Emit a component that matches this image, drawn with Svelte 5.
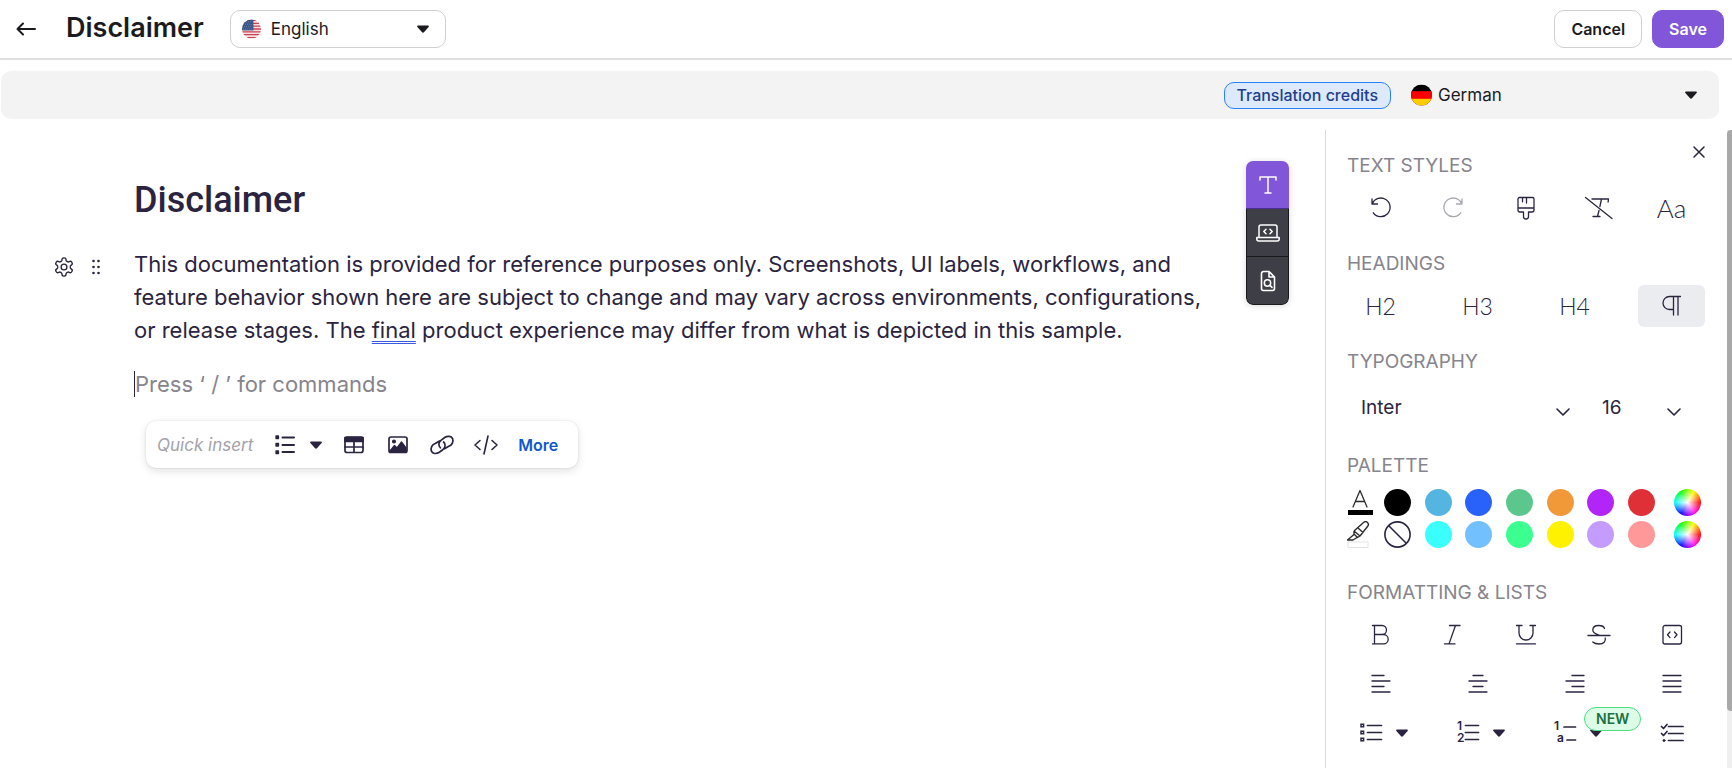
<script>
    let sourceLanguage = $state('English');
    let targetLanguage = $state('German');
    let fontFamily = $state('Inter');
    let fontSize = $state('16');
    let block = $state('Paragraph');
    let tool = $state('text');
    let panelOpen = $state(true);

    const tools = [
        { id: 'text', label: 'Text' },
        { id: 'laptop', label: 'Embed code' },
        { id: 'docsearch', label: 'Find in document' }
    ];

    const textStyles = [
        { id: 'undo', label: 'Undo' },
        { id: 'redo', label: 'Redo', disabled: true },
        { id: 'brush', label: 'Copy formatting' },
        { id: 'clear', label: 'Clear formatting' }
    ];

    const headings = ['H2', 'H3', 'H4'];

    const textColors = ['#000000', '#53b5e0', '#2962fb', '#5cc78d', '#f19938', '#b125f8', '#de3036'];
    const markerColors = ['#3bffff', '#73c0ff', '#3bff8f', '#fff200', '#c49cff', '#ff9999'];

    const formats = [
        { id: 'bold', label: 'Bold' },
        { id: 'italic', label: 'Italic' },
        { id: 'underline', label: 'Underline' },
        { id: 'strike', label: 'Strikethrough' },
        { id: 'inlinecode', label: 'Inline code' }
    ];

    const alignments = [
        { id: 'left', label: 'Align left' },
        { id: 'center', label: 'Align center' },
        { id: 'right', label: 'Align right' },
        { id: 'justify', label: 'Justify' }
    ];

    const inserts = [
        { id: 'table', label: 'Table' },
        { id: 'image', label: 'Image' },
        { id: 'link', label: 'Link' },
        { id: 'code', label: 'Code' }
    ];
</script>

{#snippet caret()}
    <svg class="caret" width="12" height="8" viewBox="0 0 12 8" aria-hidden="true">
        <path d="M1 .5h10c.9 0 1.200.8.6 1.500L7.200 7a1.600 1.600 0 0 1-2.400 0L.4 2C-.2 1.300.1.5 1 .5z" fill="currentColor" />
    </svg>
{/snippet}

{#snippet chevron()}
    <svg class="chevron" width="14" height="8" viewBox="0 0 14 8" fill="none" stroke="currentColor" stroke-width="1.600" stroke-linecap="round" stroke-linejoin="round" aria-hidden="true">
        <path d="M1 1l6 6 6-6" />
    </svg>
{/snippet}

{#snippet icon(name)}
    <svg class="icon" width="24" height="24" viewBox="0 0 24 24" fill="none" stroke="currentColor" stroke-width="1.300" stroke-linecap="round" stroke-linejoin="round" aria-hidden="true">
        {#if name === 'text'}
            <path stroke-width="1.500" d="M4 7V4h16v3M12 4v16M9 20h6" />
        {:else if name === 'laptop'}
            <path stroke-width="1.500" d="M3 16V6a2 2 0 0 1 2-2h14a2 2 0 0 1 2 2v10M.8 16.500h22.400v1.500a2 2 0 0 1-2 2H2.800a2 2 0 0 1-2-2zM10 8.200L7.800 10.500 10 12.800M14 8.200l2.200 2.300-2.200 2.300" />
        {:else if name === 'docsearch'}
            <path stroke-width="1.600" d="M13 2.500H7.500a2 2 0 0 0-2 2v15a2 2 0 0 0 2 2h9a2 2 0 0 0 2-2V8zM13 2.500V8h5.500" />
            <circle stroke-width="1.500" cx="11.500" cy="14" r="3.200" />
            <path stroke-width="1.500" d="M14 16.400l2 2" />
        {:else if name === 'undo'}
            <path d="M3 3v5h5.500M3.200 7.800A9.300 9.300 0 1 1 4.300 16.800" />
        {:else if name === 'redo'}
            <path d="M21 3v5h-5.500M20.800 7.800A9.300 9.300 0 1 0 19.700 16.800" />
        {:else if name === 'brush'}
            <path d="M4 3a1.500 1.500 0 0 1 1.500-1.500h13A1.500 1.500 0 0 1 20 3v11a2 2 0 0 1-2 2h-3.500v4.500a2.500 2.500 0 0 1-5 0V16H6a2 2 0 0 1-2-2zM4 12h16M8.500 1.500v4.300M12.500 1.500v5.500" />
        {:else if name === 'clear'}
            <path d="M-1.500 1.500L25 22.500M5 3h16.500l-.4 3M14.500 3l-1.600 7.500M12 14.500L10.500 20.500M6 20.500h7" />
        {:else if name === 'bold'}
            <path d="M3.500 2.500H13a4.500 4.500 0 0 1 0 9H5.500M13 11.500h1.500a4.700 4.700 0 0 1 0 9.400h-11M5.500 2.500v18.400" />
        {:else if name === 'italic'}
            <path d="M8.500 2.500H19M3.500 20.900h10.500M14.500 2.500L8 20.900" />
        {:else if name === 'underline'}
            <path d="M2.500 2.500h5.500M16 2.500h5.500M5 2.500v7.500a7 7 0 0 0 14 0V2.500M2.500 20.900h19" />
        {:else if name === 'strike'}
            <path d="M1 12.500h22M17.500 5.500c-.6-2-2.800-3-5.700-3-3.800 0-6 1.600-6 4.500 0 3.200 3.500 4.200 7 5.500M18.200 15c1 3.500-1.700 6-6 6-2.800 0-5.200-.8-6.400-2" />
        {:else if name === 'inlinecode'}
            <rect x="3" y="2.500" width="18.500" height="18.500" rx="2" />
            <path d="M10 9l-2.500 2.800L10 14.600M14.500 9l2.500 2.800-2.500 2.800" />
        {:else if name === 'left'}
            <path d="M3 3.500h12M3 9h18M3 14.500h12M3 20h18" />
        {:else if name === 'center'}
            <path d="M7 3.500h10M3 9h18M7 14.500h10M3 20h18" />
        {:else if name === 'right'}
            <path d="M9 3.500h12M3 9h18M9 14.500h12M3 20h18" />
        {:else if name === 'justify'}
            <path d="M3 3.500h18M3 9h18M3 14.500h18M3 20h18" />
        {:else if name === 'bullets'}
            <path stroke-width="1.700" d="M8.500 4.500H22.500M8.500 11.500H22.500M8.500 18.500H22.500" />
            <path stroke-width="1.500" stroke-linejoin="miter" d="M2 3.200h2.600v2.600H2zM2 10.200h2.600v2.600H2zM2 17.200h2.600v2.600H2z" />
        {:else if name === 'numbers'}
            <path stroke-width="1.700" d="M9.500 4.500h13M9.500 11.500h13M9.500 18.500h13" />
            <text x="1" y="9">1</text>
            <text x="1" y="21">2</text>
        {:else if name === 'outline'}
            <path stroke-width="1.700" d="M11 6h11.500M14 19h8.500" />
            <text x="1" y="9">1</text>
            <text x="4" y="21">a</text>
        {:else if name === 'checks'}
            <path stroke-width="1.700" d="M8.500 5.500H23M8.500 12.500H23M8.500 19.500H23M1.500 5.500l2 2L7 3.500M1.500 12.500l2 2L7 10.500" />
            <circle cx="4" cy="19.500" r="1" fill="currentColor" stroke-width="1" />
        {:else if name === 'list'}
            <path stroke-width="2" d="M9.500 4.500H21M9.500 12H21M9.500 19H21" />
            <path d="M3 3h2.500v2.500H3zM3 10.500h2.500V13H3zM3 18h2.500v2.500H3z" fill="currentColor" />
        {:else if name === 'table'}
            <rect stroke-width="1.700" x="3" y="4" width="18" height="15.500" rx="2" />
            <path stroke-width="1.700" d="M3 4.500h18v4H3z" fill="currentColor" />
            <path stroke-width="1.700" d="M3 14h18M12 8v11" />
        {:else if name === 'image'}
            <rect stroke-width="1.700" x="3" y="4" width="18" height="15.500" rx="2" />
            <path d="M4 18l4.500-5.500 2.500 2.500 4.500-6L20 15v4H4z" fill="currentColor" />
            <circle cx="8" cy="8.500" r="1.400" fill="currentColor" />
        {:else if name === 'link'}
            <path stroke-width="1.700" d="M9.500 8L5.200 10.500a6 6 0 0 0-3.800 7.700c1.300 2.700 5 3 7.900 1.100l3.500-2.600c2.700-2.200 3.100-5.700.8-7.700M14.500 15.800l4.300-2.500a6 6 0 0 0 3.800-7.700c-1.300-2.700-5-3-7.900-1.100l-3.500 2.600C8.500 9.300 8.100 12.800 10.400 14.800" />
        {:else if name === 'code'}
            <path stroke-width="1.600" d="M6 7.500L1 12l5 4.500M18 7.500l5 4.500-5 4.500M14 3l-4 18" />
        {/if}
    </svg>
{/snippet}

<div class="page">
    <header class="topbar">
        <button class="back" aria-label="Back">
            <svg width="20" height="14" viewBox="0 0 20 14" fill="none" stroke="currentColor" stroke-width="2" stroke-linecap="round" stroke-linejoin="round">
                <path d="M19 7H1.500M7 1.500L1.500 7 7 12.500" />
            </svg>
        </button>
        <h1>Disclaimer</h1>
        <label class="language">
            <svg width="19" height="20" viewBox="0 0 20 20" aria-hidden="true">
                <clipPath id="us"><circle cx="10" cy="10" r="10" /></clipPath>
                <g clip-path="url(#us)">
                    <rect width="20" height="20" fill="#f7dfe1" />
                    <path d="M0 1h20M0 4h20M0 7h20M0 10h20M0 13h20M0 16h20M0 19h20" stroke="#cb4453" stroke-width="1.400" />
                    <rect width="12" height="11.500" fill="#3a5587" />
                    <path d="M2 2.500h9M1 5h10M2 7.500h9M1 10h10" stroke="#8193b5" stroke-width=".8" stroke-dasharray="1 1.200" />
                </g>
            </svg>
            <select bind:value={sourceLanguage} aria-label="Source language">
                <option>English</option>
                <option>French</option>
            </select>
            {@render caret()}
        </label>
        <div class="actions">
            <button class="btn">Cancel</button>
            <button class="btn primary">Save</button>
        </div>
    </header>

    <div class="translation">
        <button class="credits">Translation credits</button>
        <label class="target">
            <svg width="21" height="22" viewBox="0 0 22 22" aria-hidden="true">
                <clipPath id="de"><circle cx="11" cy="11" r="11" /></clipPath>
                <g clip-path="url(#de)">
                    <rect width="22" height="22" fill="#000" />
                    <rect y="7" width="22" height="15" fill="#f00" />
                    <rect y="15" width="22" height="7" fill="#fc0" />
                </g>
            </svg>
            <select bind:value={targetLanguage} aria-label="Target language">
                <option>German</option>
                <option>Spanish</option>
            </select>
            {@render caret()}
        </label>
    </div>

    <div class="workspace">
        <main class="editor">
            <div class="gutter">
                <button aria-label="Block settings">
                    <svg width="20" height="20" viewBox="1 1 22 22" fill="none" stroke="currentColor" stroke-width="1.500" stroke-linejoin="round">
                        <circle cx="12" cy="12" r="3.200" />
                        <path d="M12.220 2h-.44a2 2 0 0 0-2 2v.18a2 2 0 0 1-1 1.730l-.43.25a2 2 0 0 1-2 0l-.15-.08a2 2 0 0 0-2.730.73l-.22.38a2 2 0 0 0 .73 2.730l.15.1a2 2 0 0 1 1 1.720v.51a2 2 0 0 1-1 1.740l-.15.09a2 2 0 0 0-.73 2.730l.22.38a2 2 0 0 0 2.730.73l.15-.08a2 2 0 0 1 2 0l.43.25a2 2 0 0 1 1 1.730V20a2 2 0 0 0 2 2h.44a2 2 0 0 0 2-2v-.18a2 2 0 0 1 1-1.730l.43-.25a2 2 0 0 1 2 0l.15.08a2 2 0 0 0 2.730-.73l.22-.39a2 2 0 0 0-.73-2.730l-.15-.08a2 2 0 0 1-1-1.740v-.5a2 2 0 0 1 1-1.740l.15-.09a2 2 0 0 0 .73-2.730l-.22-.38a2 2 0 0 0-2.730-.73l-.15.08a2 2 0 0 1-2 0l-.43-.25a2 2 0 0 1-1-1.730V4a2 2 0 0 0-2-2z" />
                    </svg>
                </button>
                <button aria-label="Move block">
                    <svg width="8" height="16" viewBox="0 0 8 16" fill="currentColor">
                        <circle cx="1.500" cy="2" r="1.300" /><circle cx="6.500" cy="2" r="1.300" />
                        <circle cx="1.500" cy="8" r="1.300" /><circle cx="6.500" cy="8" r="1.300" />
                        <circle cx="1.500" cy="14" r="1.300" /><circle cx="6.500" cy="14" r="1.300" />
                    </svg>
                </button>
            </div>

            <article>
                <h2>Disclaimer</h2>
                <p>
                    This documentation is provided for reference purposes only. Screenshots, UI labels, workflows, and
                    feature behavior shown here are subject to change and may vary across environments, configurations,
                    or release stages. The <span class="grammar">final</span> product experience may differ from what is
                    depicted in this sample.
                </p>
                <input class="command" placeholder="Press ‘ / ’ for commands" aria-label="New block" />
                <div class="quick">
                    <span class="hint">Quick insert</span>
                    <button class="split" aria-label="List">{@render icon('list')}{@render caret()}</button>
                    {#each inserts as item (item.id)}
                        <button aria-label={item.label}>{@render icon(item.id)}</button>
                    {/each}
                    <button class="more">More</button>
                </div>
            </article>

            <div class="dock">
                {#each tools as item (item.id)}
                    <button class:active={tool === item.id} aria-label={item.label} onclick={() => (tool = item.id)}>
                        {@render icon(item.id)}
                    </button>
                {/each}
            </div>
        </main>

        {#if panelOpen}
            <aside>
                <button class="close" aria-label="Close panel" onclick={() => (panelOpen = false)}>
                    <svg width="12" height="12" viewBox="0 0 12 12" stroke="currentColor" stroke-width="1.500" stroke-linecap="round">
                        <path d="M1 1l10 10M11 1L1 11" />
                    </svg>
                </button>

                <section>
                    <h3>TEXT STYLES</h3>
                    <div class="row">
                        {#each textStyles as item (item.id)}
                            <button aria-label={item.label} disabled={item.disabled}>{@render icon(item.id)}</button>
                        {/each}
                        <button class="letter case" aria-label="Change case">Aa</button>
                    </div>
                </section>

                <section>
                    <h3>HEADINGS</h3>
                    <div class="row">
                        {#each headings as name (name)}
                            <button class="letter" class:selected={block === name} onclick={() => (block = name)}>{name}</button>
                        {/each}
                        <button class:selected={block === 'Paragraph'} aria-label="Paragraph" onclick={() => (block = 'Paragraph')}>
                            <svg width="24" height="24" viewBox="0 0 24 24" fill="none" stroke="currentColor" stroke-width="1.300" stroke-linecap="round">
                                <path d="M20.500 2.500H9.500a6.500 6.500 0 0 0 0 13h4M13.500 2.500v18.500M18 2.500v18.500" />
                            </svg>
                        </button>
                    </div>
                </section>

                <section>
                    <h3>TYPOGRAPHY</h3>
                    <div class="fonts">
                        <label>
                            <select bind:value={fontFamily} aria-label="Font family">
                                <option>Inter</option>
                                <option>Roboto</option>
                            </select>
                            {@render chevron()}
                        </label>
                        <label class="size">
                            <select bind:value={fontSize} aria-label="Font size">
                                <option>16</option>
                                <option>18</option>
                            </select>
                            {@render chevron()}
                        </label>
                    </div>
                </section>

                <section>
                    <h3>PALETTE</h3>
                    <div class="palette">
                        <svg width="26" height="27" viewBox="0 0 26 27" fill="none" stroke="#2c2c2c" stroke-width="1.300" stroke-linecap="round" stroke-linejoin="round" aria-hidden="true">
                            <path d="M6 18L13 1.500 20 18M8.500 12.500h9" />
                            <path d="M1 23.500h25" stroke="#000" stroke-width="5" stroke-linecap="butt" />
                        </svg>
                        <div class="swatches">
                            {#each textColors as color (color)}
                                <button style:background={color} aria-label="Text color {color}"></button>
                            {/each}
                        </div>
                        <button class="wheel" aria-label="Custom text color"></button>
                    </div>
                    <div class="palette">
                        <svg width="26" height="27" viewBox="0 0 26 27" fill="none" stroke="#2c2c2c" stroke-width="1.400" stroke-linejoin="round" aria-hidden="true">
                            <path d="M7 10L16.500 1.500c1.300-1.200 3-1 4 0s1 2.800 0 4L13 15M7 10v3l3.500 3.500 2.500-1.500M7 10l6 5M7 13.500L.5 19H6l4-2.500M11 7l5 4.500" />
                            <path d="M1 21h20v5.500H1z" stroke="#e3e3e3" stroke-width="1" fill="#fff" />
                        </svg>
                        <div class="swatches">
                            <button class="none" aria-label="No highlight">
                                <svg width="27" height="27" viewBox="0 0 27 27" fill="none" stroke="currentColor" stroke-width="1.600">
                                    <circle cx="13.500" cy="13.500" r="12.600" />
                                    <path d="M4.500 4.500l18 18" />
                                </svg>
                            </button>
                            {#each markerColors as color (color)}
                                <button style:background={color} aria-label="Highlight {color}"></button>
                            {/each}
                        </div>
                        <button class="wheel" aria-label="Custom highlight"></button>
                    </div>
                </section>

                <section>
                    <h3>FORMATTING &amp; LISTS</h3>
                    <div class="row">
                        {#each formats as item (item.id)}
                            <button aria-label={item.label}>{@render icon(item.id)}</button>
                        {/each}
                    </div>
                    <div class="row">
                        {#each alignments as item (item.id)}
                            <button aria-label={item.label}>{@render icon(item.id)}</button>
                        {/each}
                    </div>
                    <div class="row">
                        <button class="split" aria-label="Bulleted list">{@render icon('bullets')}{@render caret()}</button>
                        <button class="split" aria-label="Numbered list">{@render icon('numbers')}{@render caret()}</button>
                        <button class="split" aria-label="Outline list">
                            {@render icon('outline')}{@render caret()}
                            <span class="badge">NEW</span>
                        </button>
                        <button aria-label="Checklist">{@render icon('checks')}</button>
                    </div>
                </section>
            </aside>
        {/if}

        <div class="scrolltrack"><div class="scrollthumb"></div></div>
    </div>
</div>

<style>
    :global(body) {
        background: #fff;
    }

    .page {
        display: flex;
        flex-direction: column;
        height: 100vh;
        overflow: hidden;
        font-family: Inter, "Liberation Sans", sans-serif;
        font-size: 17px;
        color: #1b1b1f;
    }

    .page :global(*) {
        box-sizing: border-box;
    }

    button,
    select,
    input {
        margin: 0;
        padding: 0;
        border: 0;
        background: none;
        font: inherit;
        color: inherit;
    }

    button,
    select {
        cursor: pointer;
    }

    select {
        flex: 1;
        min-width: 0;
        appearance: none;
        outline: none;
    }

    svg {
        display: block;
        flex-shrink: 0;
    }

    h1,
    h2,
    h3,
    p {
        margin: 0;
    }

    .topbar {
        display: flex;
        align-items: center;
        flex-shrink: 0;
        height: 60px;
        padding: 0 8px 0 16px;
        border-bottom: 2px solid #e0e0e0;
    }

    .back {
        margin-right: 30px;
    }

    h1 {
        margin-right: 26px;
        padding-bottom: 2px;
        font-size: 27px;
        line-height: 36px;
        font-weight: 600;
    }

    .language {
        display: flex;
        align-items: center;
        gap: 10px;
        width: 216px;
        height: 38px;
        padding: 0 16px 0 11px;
        border: 1px solid #d0d0d0;
        border-radius: 10px;
    }

    .actions {
        display: flex;
        gap: 10px;
        margin-left: auto;
    }

    .btn {
        height: 38px;
        padding: 0 16px;
        border: 1px solid #d0d0d0;
        border-radius: 10px;
        font-size: 16px;
        font-weight: 600;
    }

    .primary {
        border-color: #8156d9;
        background: #8156d9;
        color: #fff;
    }

    .translation {
        display: flex;
        align-items: center;
        justify-content: flex-end;
        gap: 20px;
        flex-shrink: 0;
        height: 48px;
        margin: 11px 13px 11px 1px;
        padding-right: 22px;
        border-radius: 10px;
        background: #f3f3f3;
    }

    .credits {
        height: 27px;
        padding: 0 12px;
        border: 1px solid #2b82f6;
        border-radius: 10px;
        background: #dde9fd;
        color: #223f8c;
        font-size: 16px;
        font-weight: 500;
    }

    .target {
        display: flex;
        align-items: center;
        gap: 6px;
        width: 286px;
    }

    .workspace {
        display: flex;
        flex: 1;
        min-height: 0;
    }

    .editor {
        display: flex;
        align-items: flex-start;
        flex: 1;
        min-width: 0;
        padding-right: 36px;
        color: #2b2440;
    }

    .gutter {
        display: flex;
        align-items: center;
        gap: 18px;
        width: 134px;
        height: 33px;
        margin-top: 120px;
        padding-left: 54px;
    }

    article {
        flex: 1;
        min-width: 0;
        margin-right: 36px;
        padding-top: 48px;
    }

    h2 {
        margin-bottom: 26px;
        font-family: Roboto, "Open Sans", sans-serif;
        font-size: 36px;
        line-height: 44px;
        font-weight: 500;
    }

    p {
        font-size: 22px;
        line-height: 33px;
    }

    .grammar {
        text-decoration: underline double #3a5be0 1px;
        text-underline-offset: 3px;
    }

    .command {
        display: block;
        width: 100%;
        height: 26px;
        margin: 24px 0;
        border-left: 1px solid #2b2440;
        outline: none;
        font-size: 22px;
    }

    .command::placeholder {
        color: #86848c;
        opacity: 1;
    }

    .quick {
        display: flex;
        align-items: center;
        gap: 20px;
        width: fit-content;
        height: 47px;
        margin-left: 12px;
        padding: 0 20px 0 11px;
        border-radius: 10px;
        box-shadow: 0 0 2px rgba(0, 0, 0, 0.12), 0 3px 8px rgba(0, 0, 0, 0.12);
    }

    .hint {
        color: #a3a2ab;
        font-size: 17px;
        font-style: italic;
    }

    .more {
        color: #0c58d0;
        font-size: 16px;
        font-weight: 600;
    }

    .split {
        position: relative;
        display: flex;
        align-items: center;
        gap: 13px;
    }

    .dock {
        width: 43px;
        margin-top: 31px;
        border-radius: 7px;
        box-shadow: 0 1px 6px rgba(0, 0, 0, 0.15);
        overflow: hidden;
    }

    .dock button {
        display: flex;
        align-items: center;
        justify-content: center;
        width: 100%;
        height: 48px;
        border: 1px solid #19191d;
        border-top: 0;
        background: #3e3e46;
        color: #fff;
    }

    .dock button.active {
        border: 0;
        border-bottom: 1px solid #4c2f94;
        background: #8156d9;
    }

    .dock button:last-child {
        border-radius: 0 0 7px 7px;
    }

    aside {
        position: relative;
        display: flex;
        flex-direction: column;
        width: 402px;
        padding: 24px 22px 0 21px;
        border-left: 1px solid #dcdcdf;
        overflow: hidden;
        color: #2b2440;
    }

    .close {
        position: absolute;
        top: 16px;
        right: 22px;
    }

    h3 {
        margin-bottom: 9px;
        color: #86848c;
        font-size: 19px;
        line-height: 24px;
        font-weight: 400;
    }

    section:nth-of-type(-n + 2) {
        margin-bottom: 16px;
    }

    section:last-of-type {
        margin-top: 33px;
    }

    .row {
        display: flex;
        justify-content: space-between;
        margin-bottom: 7px;
    }

    .row button {
        display: flex;
        align-items: center;
        justify-content: center;
        width: 67px;
        height: 42px;
        border-radius: 6px;
    }

    .row .split {
        padding-left: 5px;
    }

    .row button:disabled {
        color: #a9a7b0;
    }

    .row .selected {
        background: #ebecf0;
    }

    .row .letter {
        font-family: Lato, "Open Sans", sans-serif;
        font-size: 23px;
        font-weight: 300;
    }

    .row .case {
        font-size: 26px;
    }

    .fonts {
        display: flex;
        gap: 32px;
        height: 42px;
        margin: 12px 0 26px;
        padding: 0 24px 0 14px;
    }

    .fonts label {
        display: flex;
        align-items: center;
        flex: 1;
        font-size: 19px;
    }

    .fonts .size {
        flex: 0 0 79px;
    }

    .chevron {
        margin-top: 10px;
    }

    .palette {
        display: flex;
        align-items: center;
        margin-top: 5px;
        padding-right: 4px;
    }

    h3 + .palette {
        margin-top: 11px;
    }

    .swatches {
        display: flex;
        justify-content: space-between;
        flex: 1;
        margin: 0 19px 0 11px;
    }

    .swatches button,
    .wheel {
        width: 27px;
        height: 27px;
        border-radius: 50%;
    }

    .wheel {
        background:
            radial-gradient(circle closest-side, #fff 0%, rgba(255, 255, 255, 0) 100%),
            conic-gradient(from 90deg, #f00, #f0f, #00f, #0ff, #0f0, #ff0, #f00);
    }

    .badge {
        position: absolute;
        top: -5px;
        left: 43px;
        padding: 0 11px;
        border: 1px solid #4ade80;
        border-radius: 12px;
        background: #dcfce7;
        color: #1f7040;
        font-size: 14px;
        line-height: 22px;
        font-weight: 600;
    }

    .icon {
        overflow: visible;
    }

    .icon text {
        font-family: Inter, "Liberation Sans", sans-serif;
        font-size: 12px;
        font-weight: 600;
        fill: currentColor;
        stroke: none;
    }

    .scrolltrack {
        width: 5px;
        background: #efefef;
    }

    .scrollthumb {
        height: 91%;
        border-radius: 4px 0 0 4px;
        background: #a8a8a8;
    }
</style>
